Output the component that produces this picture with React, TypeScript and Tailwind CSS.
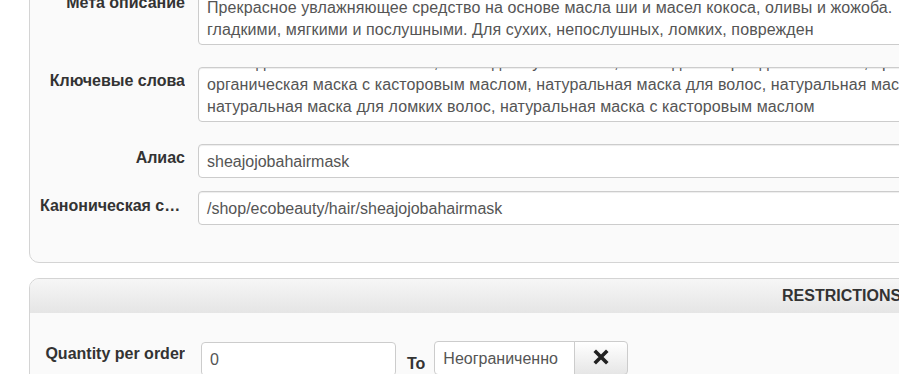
import React from 'react'

const labelCls =
  "w-[145px] shrink-0 truncate text-right text-[16px] font-bold leading-[22px] text-[#333]"

function TextBox({ lines, offset }: { lines: string[]; offset: number }) {
  return (
    <div className="h-[55px] flex-1 overflow-hidden rounded-[4px] border border-[#ccc] bg-white px-2 shadow-[inset_0_1px_1px_rgba(0,0,0,0.075)]">
      <div style={{ marginTop: offset }}>
        {lines.map((l, i) => (
          <div key={i} className="whitespace-nowrap text-[16px] leading-[22px] tracking-[0.1px] text-[#555]">
            {l}
          </div>
        ))}
      </div>
    </div>
  )
}

function Field({ value }: { value: string }) {
  return (
    <div className="h-[34px] flex-1 rounded-[4px] border border-[#ccc] bg-white px-2 pt-[6px] pb-[4px] text-[16px] leading-[22px] text-[#555] whitespace-nowrap shadow-[inset_0_1px_1px_rgba(0,0,0,0.075)]">
      {value}
    </div>
  )
}

export default function App() {
  return (
    <div className="h-[374px] w-[899px] overflow-hidden bg-white font-['Liberation_Sans',Arial,sans-serif]">
      {/* SEO panel (top cut off) */}
      <div className="ml-[29px] -mt-[40px] w-[1000px] rounded-[10px] border border-[#d4d4d4] bg-[#fafafa] pb-[37px] pl-[10px] pt-[29px]">
        <div className="mb-[22px] flex gap-[13px]">
          <div className={labelCls + ' pt-[2px]'}>Мета описание</div>
          <TextBox
            offset={6}
            lines={[
              'Прекрасное увлажняющее средство на основе масла ши и масел кокоса, оливы и жожоба.',
              'гладкими, мягкими и послушными. Для сухих, непослушных, ломких, поврежден',
            ]}
          />
        </div>
        <div className="mb-[22px] flex gap-[13px]">
          <div className={labelCls + ' pt-[3px]'}>Ключевые слова</div>
          <TextBox
            offset={-16}
            lines={[
              'маска для волос с маслом ши, маска для сухих волос, маска для поврежденных волос, органическая маска',
              'органическая маска с касторовым маслом, натуральная маска для волос, натуральная маска для сухих волос',
              'натуральная маска для ломких волос, натуральная маска с касторовым маслом',
            ]}
          />
        </div>
        <div className="mb-[13px] flex gap-[13px]">
          <div className={labelCls + ' pt-[3px]'}>Алиас</div>
          <Field value="sheajojobahairmask" />
        </div>
        <div className="flex gap-[13px]">
          <div className={labelCls + ' pt-[4px]'}>Каноническая ссылка</div>
          <Field value="/shop/ecobeauty/hair/sheajojobahairmask" />
        </div>
      </div>

      {/* Restrictions panel */}
      <div className="ml-[29px] mt-[15px] w-[1000px] overflow-hidden rounded-[10px] border border-[#d4d4d4] bg-[#fafafa]">
        <div className="h-[34px] bg-gradient-to-b from-[#f6f6f6] to-[#e5e5e5] pl-[752px] text-[16px] font-bold leading-[34px] text-[#333]">
          RESTRICTIONS
        </div>
        <div className="flex pl-[10px] pt-[29px] pb-[20px]">
          <div className={labelCls + ' pt-[1px]'}>Quantity per order</div>
          <div className="ml-[16px] h-[34px] w-[195px] rounded-[4px] border border-[#ccc] bg-white px-2 pt-[6px] pb-[4px] text-[16px] leading-[22px] text-[#555]">
            0
          </div>
          <div className="ml-[11px] mt-[11px] text-[16px] font-bold leading-[22px] text-[#333]">To</div>
          <div className="ml-[9px] -mt-[1px] flex h-[34px]">
            <div className="w-[141px] rounded-l-[4px] border border-[#ccc] bg-white px-2 pt-[6px] pb-[4px] text-[16px] leading-[22px] text-[#555]">
              Неограниченно
            </div>
            <div className="-ml-px flex w-[54px] items-start justify-center rounded-r-[4px] border border-[#ccc] bg-gradient-to-b from-white to-[#e6e6e6] pt-[7px]">
              <svg width="16" height="16" viewBox="0 0 16 16">
                <path d="M3 3 L13 13 M13 3 L3 13" stroke="#222" strokeWidth="3.6" strokeLinecap="square" />
              </svg>
            </div>
          </div>
        </div>
      </div>
    </div>
  )
}
